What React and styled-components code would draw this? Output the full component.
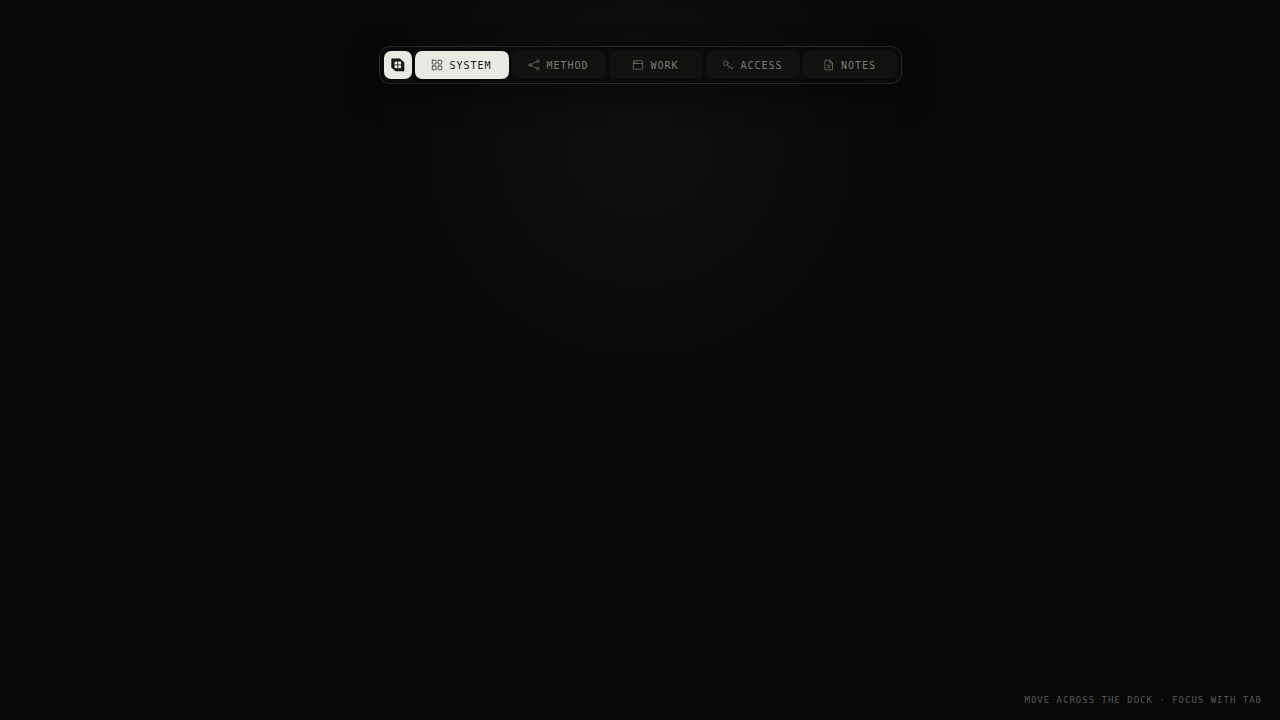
import styled, { createGlobalStyle, ThemeProvider } from "styled-components";
import { useState } from "react";

const theme = {
  colors: {
    page: "#080808",
    dock: "#0a0a0a",
    dockBorder: "#262626",
    tab: "#11110f",
    tabText: "#7c7c78",
    light: "#e8e9e3",
    ink: "#161614",
    hint: "#5a5a58",
  },
  fonts: {
    mono: '"DejaVu Sans Mono", "Liberation Mono", monospace',
  },
};

const GlobalStyle = createGlobalStyle`
  *, *::before, *::after {
    box-sizing: border-box;
  }
  body {
    margin: 0;
    background: ${theme.colors.page};
    font-family: ${theme.fonts.mono};
  }
`;

const Page = styled.main`
  display: flex;
  flex-direction: column;
  align-items: center;
  justify-content: space-between;
  min-height: 100vh;
  padding: 46px 18px 14px;
  background: radial-gradient(
    circle at 50% 20%,
    rgba(255, 255, 255, 0.036),
    transparent 34%
  );
`;

const Dock = styled.nav`
  display: flex;
  align-items: center;
  gap: 3px;
  padding: 4px;
  background: ${(props) => props.theme.colors.dock};
  border: 1px solid ${(props) => props.theme.colors.dockBorder};
  border-radius: 11px;
  box-shadow: 0 12px 32px rgba(0, 0, 0, 0.42);
`;

const Logo = styled.a`
  display: flex;
  align-items: center;
  justify-content: center;
  width: 28px;
  height: 28px;
  border-radius: 7px;
  background: ${(props) => props.theme.colors.light};
  color: ${(props) => props.theme.colors.ink};
`;

const Tab = styled.a`
  display: flex;
  align-items: center;
  justify-content: center;
  gap: 6px;
  width: 94px;
  height: 28px;
  border-radius: 7px;
  background: ${(props) =>
    props.$active ? props.theme.colors.light : props.theme.colors.tab};
  color: ${(props) =>
    props.$active ? props.theme.colors.ink : props.theme.colors.tabText};
  font-size: 10px;
  line-height: 13px;
  letter-spacing: 1px;
  text-decoration: none;
  text-transform: uppercase;
`;

const Icon = styled.svg`
  flex: none;
  width: 12px;
  height: 12px;
  fill: none;
  stroke: currentColor;
  stroke-width: 1.8;
  stroke-linecap: round;
  stroke-linejoin: round;
  opacity: 0.8;
`;

const Hint = styled.p`
  align-self: flex-end;
  margin: 0;
  color: ${(props) => props.theme.colors.hint};
  font-size: 9px;
  line-height: 12px;
  letter-spacing: 1px;
  text-transform: uppercase;
`;

const LogoMark = () => (
  <svg width="14" height="14" viewBox="0 0 14 14" aria-hidden="true">
    <path
      fill="currentColor"
      d="M.8 .5H9L13.3 4.4V12.8a.5 .5 0 0 1-.5 .5H4.6L.3 9.4V1A.5 .5 0 0 1 .8 .5Z"
    />
    <path
      fill={theme.colors.light}
      d="M4.5 3.6H6.4V6.5H3.5V4.6A1 1 0 0 1 4.5 3.6ZM7.2 3.6H9.1a1 1 0 0 1 1 1V6.5H7.2ZM3.5 7.3H6.4V10.2H4.5a1 1 0 0 1-1-1ZM7.2 7.3H10.1V9.2a1 1 0 0 1-1 1H7.2Z"
    />
  </svg>
);

const tabs = [
  {
    name: "System",
    icon: (
      <>
        <rect x="2.5" y="2.5" width="7.5" height="7.5" rx="1" />
        <rect x="14" y="2.5" width="7.5" height="7.5" rx="1" />
        <rect x="2.5" y="14" width="7.5" height="7.5" rx="1" />
        <rect x="14" y="14" width="7.5" height="7.5" rx="1" />
      </>
    ),
  },
  {
    name: "Method",
    icon: (
      <>
        <circle cx="4" cy="12" r="2.6" />
        <circle cx="19.5" cy="4.5" r="2.6" />
        <circle cx="19.5" cy="19.5" r="2.6" />
        <path d="M6.4 10.9 17 5.7M6.4 13.1 17 18.3" />
      </>
    ),
  },
  {
    name: "Work",
    icon: (
      <>
        <rect x="2.5" y="3.5" width="19" height="17" rx="2" />
        <path d="M2.5 9h19M6 6.3h.1M9 6.3h.1" />
      </>
    ),
  },
  {
    name: "Access",
    icon: (
      <>
        <circle cx="7.5" cy="8.5" r="4.6" />
        <path d="M11 11.8 20.5 20M15.5 15.7l-2 2.6M19.5 19.2l2-2.6" />
      </>
    ),
  },
  {
    name: "Notes",
    icon: (
      <>
        <path d="M4.5 2.5H14l5 5V21.5H4.5Z" />
        <path d="M14 2.5V8h5M8.5 12.5h6.5M8.5 16.5h6.5" />
      </>
    ),
  },
];

const App = () => {
  const [active, setActive] = useState("System");

  return (
    <ThemeProvider theme={theme}>
      <GlobalStyle />
      <Page>
        <Dock aria-label="Main">
          <Logo href="#home" aria-label="Home">
            <LogoMark />
          </Logo>
          {tabs.map(({ name, icon }) => (
            <Tab
              key={name}
              href={`#${name.toLowerCase()}`}
              $active={active === name}
              aria-current={active === name ? "page" : undefined}
              onMouseEnter={() => setActive(name)}
              onFocus={() => setActive(name)}
            >
              <Icon viewBox="0 0 24 24" aria-hidden="true">
                {icon}
              </Icon>
              {name}
            </Tab>
          ))}
        </Dock>
        <Hint>Move across the dock · Focus with tab</Hint>
      </Page>
    </ThemeProvider>
  );
};

export default App;
